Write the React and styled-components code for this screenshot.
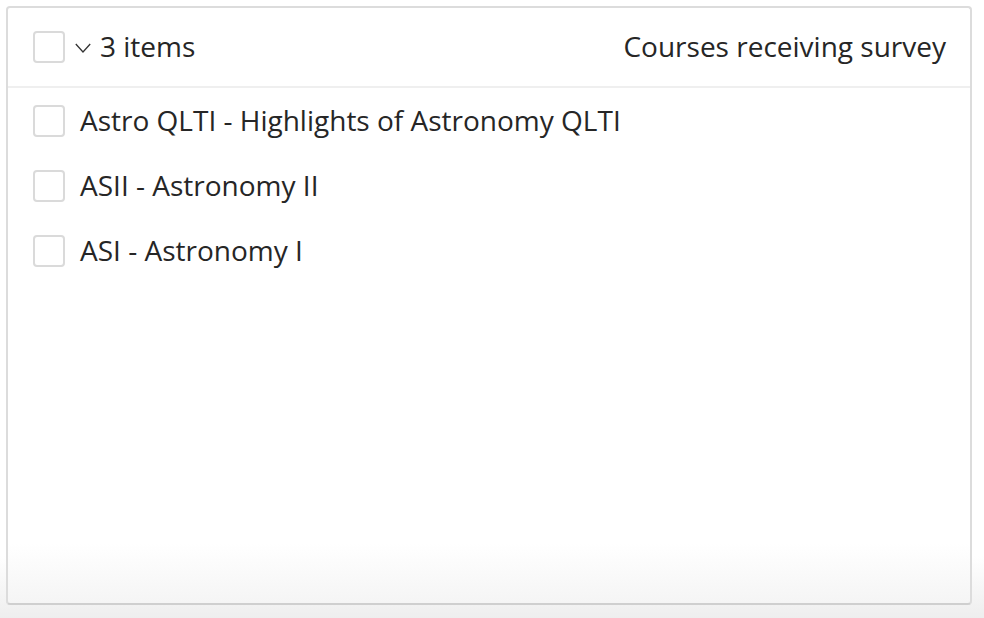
import React from "react";
import styled, { createGlobalStyle } from "styled-components";

const GlobalStyle = createGlobalStyle`
  html, body {
    margin: 0;
    padding: 0;
  }
  body {
    height: 618px;
    background: linear-gradient(to bottom, #ffffff 0%, #ffffff 90%, #eeeeee 100%);
    font-family: "Open Sans", "Liberation Sans", sans-serif;
    color: #262626;
  }
`;

const courses = [
  { id: 1, name: "Astro QLTI - Highlights of Astronomy QLTI" },
  { id: 2, name: "ASII - Astronomy II" },
  { id: 3, name: "ASI - Astronomy I" },
];

function App() {
  return (
    <>
      <GlobalStyle />
      <StPage>
        <StPanel>
          <StHeader>
            <StLeft>
              <StCheck />
              <StChevron viewBox="0 0 16 10" aria-hidden="true">
                <polyline points="0.8,1 8,9 15.2,1" />
              </StChevron>
              <StCount>3 items</StCount>
            </StLeft>
            <StTitle>Courses receiving survey</StTitle>
          </StHeader>
          <StList>
            {courses.map((course) => {
              return (
                <StRow key={course.id}>
                  <StCheck />
                  <StName>{course.name}</StName>
                </StRow>
              );
            })}
          </StList>
        </StPanel>
      </StPage>
    </>
  );
}

export default App;

const StPage = styled.div`
  padding: 6px 12px 13px 6px;
  height: 618px;
  box-sizing: border-box;
  display: flex;
`;

const StPanel = styled.div`
  flex: 1;
  display: flex;
  flex-direction: column;
  border: 2px solid #dcdcdc;
  border-bottom-color: #cfcfcf;
  border-radius: 4px;
  background: linear-gradient(to bottom, #ffffff 0%, #ffffff 90%, #f5f5f5 100%);
`;

const StHeader = styled.div`
  height: 78px;
  display: flex;
  align-items: center;
  justify-content: space-between;
  padding: 0 24px 0 25px;
  border-bottom: 2px solid #efefef;
`;

const StLeft = styled.div`
  display: flex;
  align-items: center;
`;

const StCheck = styled.span`
  display: block;
  width: 28px;
  height: 28px;
  border: 2px solid #dadada;
  border-radius: 4px;
  background: #fff;
  flex-shrink: 0;
`;

const StChevron = styled.svg`
  display: block;
  flex-shrink: 0;
  width: 16px;
  height: 10px;
  margin: 2px 0 0 10px;
  fill: none;
  stroke: #333;
  stroke-width: 1.3;
`;

const StCount = styled.span`
  font-size: 28px;
  margin: -2px 0 0 9px;
`;

const StTitle = styled.span`
  font-size: 28px;
  margin-top: -2px;
`;

const StList = styled.div`
  display: flex;
  flex-direction: column;
`;

const StRow = styled.div`
  height: 65px;
  display: flex;
  align-items: center;
  padding-left: 25px;
`;

const StName = styled.span`
  font-size: 28px;
  margin: -2px 0 0 15px;
`;
